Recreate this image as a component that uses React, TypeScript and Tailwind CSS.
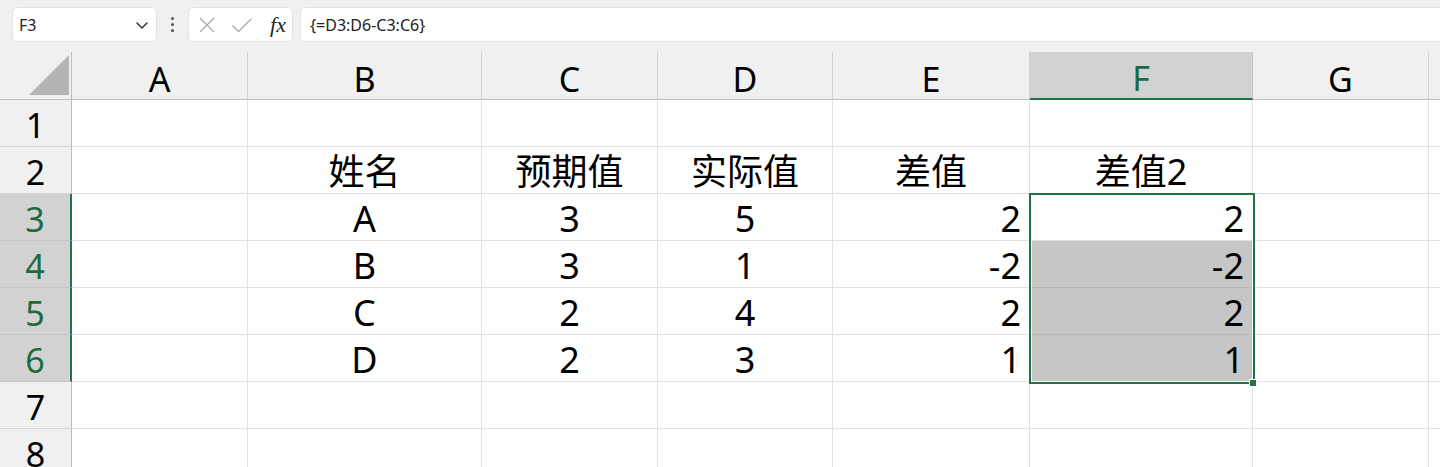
import React from "react";

const FONT = '"Noto Sans", "Noto Sans CJK SC", sans-serif';

const cols = [
  { key: "A", w: "w-[176px]" },
  { key: "B", w: "w-[234px]" },
  { key: "C", w: "w-[176px]" },
  { key: "D", w: "w-[175px]" },
  { key: "E", w: "w-[197px]" },
  { key: "F", w: "w-[223px]" },
  { key: "G", w: "w-[176px]" },
];

type Cell = { t: string; align: "c" | "r" };
const data: Record<number, Record<string, Cell>> = {
  2: {
    B: { t: "姓名", align: "c" },
    C: { t: "预期值", align: "c" },
    D: { t: "实际值", align: "c" },
    E: { t: "差值", align: "c" },
    F: { t: "差值2", align: "c" },
  },
  3: {
    B: { t: "A", align: "c" },
    C: { t: "3", align: "c" },
    D: { t: "5", align: "c" },
    E: { t: "2", align: "r" },
    F: { t: "2", align: "r" },
  },
  4: {
    B: { t: "B", align: "c" },
    C: { t: "3", align: "c" },
    D: { t: "1", align: "c" },
    E: { t: "-2", align: "r" },
    F: { t: "-2", align: "r" },
  },
  5: {
    B: { t: "C", align: "c" },
    C: { t: "2", align: "c" },
    D: { t: "4", align: "c" },
    E: { t: "2", align: "r" },
    F: { t: "2", align: "r" },
  },
  6: {
    B: { t: "D", align: "c" },
    C: { t: "2", align: "c" },
    D: { t: "3", align: "c" },
    E: { t: "1", align: "r" },
    F: { t: "1", align: "r" },
  },
};

function TopBar() {
  return (
    <div className="h-[52px] bg-[#f0f0f0] flex items-start pt-[7px] pl-[12px]">
      <div className="w-[145px] h-[35px] bg-white rounded-[5px] border border-[#e3e3e3] flex items-center justify-between pl-[6px] pr-[5px]">
        <span className="text-[16px] text-[#222] leading-none" style={{ fontFamily: '"Noto Sans", sans-serif' }}>F3</span>
        <svg width="18" height="18" viewBox="0 0 18 18" fill="none">
          <path d="M4 7 L9 12 L14 7" stroke="#333" strokeWidth="1.5" strokeLinecap="round" strokeLinejoin="round" />
        </svg>
      </div>
      <div className="w-[31px] h-[35px] flex flex-col items-center justify-center gap-[3px]">
        <div className="w-[3px] h-[3px] rounded-full bg-[#555]" />
        <div className="w-[3px] h-[3px] rounded-full bg-[#555]" />
        <div className="w-[3px] h-[3px] rounded-full bg-[#555]" />
      </div>
      <div className="w-[105px] h-[35px] bg-white rounded-[5px] border border-[#e3e3e3] flex items-center pl-[9px] pr-[6px]">
        <svg width="18" height="18" viewBox="0 0 18 18" fill="none">
          <path d="M2 2 L16 16 M16 2 L2 16" stroke="#a8a8a8" strokeWidth="1.3" />
        </svg>
        <svg width="22" height="18" viewBox="0 0 22 18" fill="none" className="ml-[15px]">
          <path d="M1.5 9.5 L7.5 15.5 L20.5 2.5" stroke="#a8a8a8" strokeWidth="1.3" />
        </svg>
        <span
          className="ml-auto text-[22px] italic text-[#222] leading-none"
          style={{ fontFamily: '"Liberation Serif", serif' }}
        >
          fx
        </span>
      </div>
      <div className="flex-1 h-[35px] ml-[7px] bg-white rounded-l-[5px] border border-r-0 border-[#e3e3e3] flex items-center pl-[9px]">
        <span className="text-[16px] text-[#222] leading-none" style={{ fontFamily: '"Noto Sans", sans-serif' }}>
          {"{=D3:D6-C3:C6}"}
        </span>
      </div>
    </div>
  );
}

function HeaderRow() {
  return (
    <div className="flex h-[48px] bg-[#f0f0f0]">
      <div className="w-[72px] h-full border-r border-b border-[#bdbdbd] flex items-end justify-end pr-[2px] pb-[4px] shrink-0">
        <svg width="40" height="40" viewBox="0 0 40 40">
          <polygon points="40,0 40,40 0,40" fill="#b4b4b4" />
        </svg>
      </div>
      {cols.map((c) => {
        const sel = c.key === "F";
        return (
          <div
            key={c.key}
            className={
              "shrink-0 h-full flex items-center justify-center text-[34px] leading-none pt-[6px] " +
              c.w +
              (sel
                ? " bg-[#d2d2d2] text-[#1d6b40] border-b-2 border-b-[#217346] border-r border-r-[#c8c8c8]"
                : " text-black border-b border-b-[#bdbdbd] border-r border-r-[#d0d0d0]")
            }
          >
            {c.key}
          </div>
        );
      })}
      <div className="flex-1 h-full border-b border-[#bdbdbd]" />
    </div>
  );
}

function Row({ n }: { n: number }) {
  const selRow = n >= 3 && n <= 6;
  const row = data[n] || {};
  return (
    <div className="flex h-[47px]">
      <div
        className={
          "w-[72px] shrink-0 h-full flex items-center justify-center text-[34px] leading-none pt-[4px] border-b " +
          (selRow
            ? "bg-[#d2d2d2] text-[#1d6b40] border-r-2 border-r-[#217346] border-b-[#c4c4c4]"
            : "bg-[#f0f0f0] text-black border-r border-r-[#bdbdbd] border-b-[#d4d4d4]")
        }
      >
        {n}
      </div>
      {cols.map((c) => {
        const cell = row[c.key];
        const gray = c.key === "F" && n >= 4 && n <= 6;
        return (
          <div
            key={c.key}
            className={
              "shrink-0 h-full flex items-end text-[36px] leading-none pb-[3px] text-black border-r border-b " +
              c.w +
              (gray ? " bg-[#c6c6c6] border-b-[#b4b4b4] border-r-[#e1e1e1]" : " bg-white border-[#e1e1e1]") +
              (cell && cell.align === "r" ? " justify-end pr-[8px]" : " justify-center")
            }
          >
            {cell ? cell.t : ""}
          </div>
        );
      })}
      <div className="flex-1 h-full border-b border-[#e1e1e1] bg-white" />
    </div>
  );
}

export default function App() {
  return (
    <div className="w-[1440px] h-[467px] overflow-hidden bg-white" style={{ fontFamily: FONT }}>
      <TopBar />
      <HeaderRow />
      <div className="relative">
        {[1, 2, 3, 4, 5, 6, 7, 8].map((n) => (
          <Row key={n} n={n} />
        ))}
        <div className="absolute left-[1029px] top-[93px] w-[226px] h-[191px] border-2 border-[#217346] pointer-events-none">
          <div className="absolute inset-0 border border-white" />
        </div>
        <div className="absolute left-[1249px] top-[279px] w-[8px] h-[8px] bg-[#217346] border border-white" />
      </div>
    </div>
  );
}
